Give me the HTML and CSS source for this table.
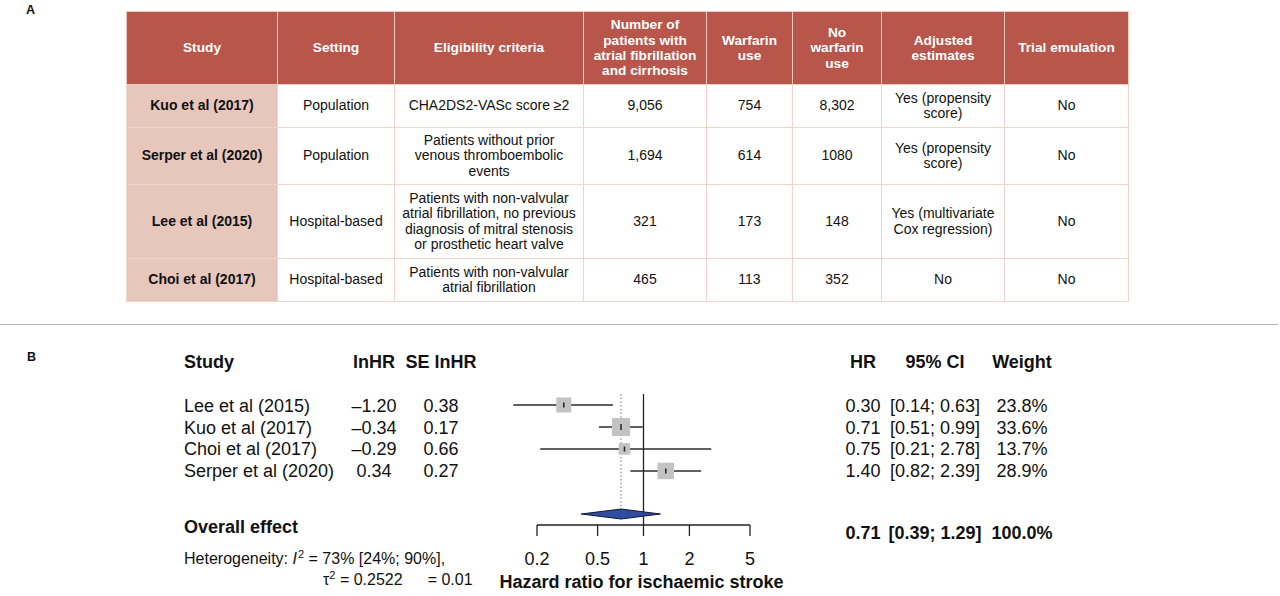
FILE: index.html
```html
<!DOCTYPE html>
<html lang="en">
<head>
<meta charset="utf-8">
<title>Warfarin in atrial fibrillation and cirrhosis</title>
<link rel="stylesheet" href="styles.css">
</head>
<body>
<section class="panel-a">
  <div class="panel-label">A</div>
  <table class="studies">
    <colgroup>
      <col class="c1"><col class="c2"><col class="c3"><col class="c4"><col class="c5"><col class="c6"><col class="c7"><col class="c8">
    </colgroup>
    <thead>
      <tr class="h-head">
        <th>Study</th>
        <th>Setting</th>
        <th>Eligibility criteria</th>
        <th>Number of patients with atrial fibrillation and cirrhosis</th>
        <th>Warfarin<br>use</th>
        <th>No<br>warfarin<br>use</th>
        <th>Adjusted<br>estimates</th>
        <th>Trial emulation</th>
      </tr>
    </thead>
    <tbody>
      <tr class="h1">
        <th>Kuo et al (2017)</th>
        <td>Population</td>
        <td>CHA2DS2-VASc score ≥2</td>
        <td>9,056</td>
        <td>754</td>
        <td>8,302</td>
        <td>Yes (propensity<br>score)</td>
        <td>No</td>
      </tr>
      <tr class="h2">
        <th>Serper et al (2020)</th>
        <td>Population</td>
        <td>Patients without prior<br>venous thromboembolic<br>events</td>
        <td>1,694</td>
        <td>614</td>
        <td>1080</td>
        <td>Yes (propensity<br>score)</td>
        <td>No</td>
      </tr>
      <tr class="h3">
        <th>Lee et al (2015)</th>
        <td>Hospital-based</td>
        <td>Patients with non-valvular<br>atrial fibrillation, no previous<br>diagnosis of mitral stenosis<br>or prosthetic heart valve</td>
        <td>321</td>
        <td>173</td>
        <td>148</td>
        <td>Yes (multivariate<br>Cox regression)</td>
        <td>No</td>
      </tr>
      <tr class="h1">
        <th>Choi et al (2017)</th>
        <td>Hospital-based</td>
        <td>Patients with non-valvular<br>atrial fibrillation</td>
        <td>465</td>
        <td>113</td>
        <td>352</td>
        <td>No</td>
        <td>No</td>
      </tr>
    </tbody>
  </table>
</section>

<section class="panel-b">
  <div class="panel-label b-label">B</div>

  <div class="left-cols">
    <div class="row head"><span class="c-study">Study</span><span class="c-ln">lnHR</span><span class="c-se">SE lnHR</span></div>
    <div class="rows">
      <div class="row"><span class="c-study">Lee et al (2015)</span><span class="c-ln">–1.20</span><span class="c-se">0.38</span></div>
      <div class="row"><span class="c-study">Kuo et al (2017)</span><span class="c-ln">–0.34</span><span class="c-se">0.17</span></div>
      <div class="row"><span class="c-study">Choi et al (2017)</span><span class="c-ln">–0.29</span><span class="c-se">0.66</span></div>
      <div class="row"><span class="c-study">Serper et al (2020)</span><span class="c-ln">0.34</span><span class="c-se">0.27</span></div>
    </div>
    <div class="overall">Overall effect</div>
    <div class="het">Heterogeneity: <i>I</i><sup>2</sup> = 73% [24%; 90%],</div>
    <div class="het het2"><span>τ<sup>2</sup> = 0.2522</span><span class="pval">= 0.01</span></div>
  </div>

  <svg class="plot" width="360" height="216" viewBox="0 0 360 216" xmlns="http://www.w3.org/2000/svg">
    <line x1="143" y1="14" x2="143" y2="132" stroke="#8a8a8a" stroke-width="1.2" stroke-dasharray="1.5 2.2"/>
    <g stroke="#2b2b2b" stroke-width="1.3">
      <line x1="35.3" y1="25" x2="134.9" y2="25"/>
      <line x1="121" y1="47" x2="164.8" y2="47"/>
      <line x1="62.2" y1="69" x2="233.2" y2="69"/>
      <line x1="152.4" y1="91" x2="223.2" y2="91"/>
    </g>
    <g fill="#c3c3c3">
      <rect x="78.3" y="17.5" width="15" height="15"/>
      <rect x="134" y="38" width="18" height="18"/>
      <rect x="140.7" y="63.2" width="11.5" height="11.5"/>
      <rect x="179.5" y="82.7" width="16.5" height="16.5"/>
    </g>
    <g stroke="#2b2b2b" stroke-width="1.6">
      <line x1="85.8" y1="22.5" x2="85.8" y2="27.5"/>
      <line x1="143" y1="44" x2="143" y2="50"/>
      <line x1="146.5" y1="66.5" x2="146.5" y2="71.5"/>
      <line x1="187.8" y1="88.5" x2="187.8" y2="93.5"/>
    </g>
    <line x1="165.5" y1="14" x2="165.5" y2="145" stroke="#222" stroke-width="1.3"/>
    <polygon points="103.2,134 143,129 182.4,134 143,139" fill="#2f4c9e" stroke="#15183a" stroke-width="1"/>
    <g stroke="#222" stroke-width="1.3">
      <line x1="59" y1="145" x2="272" y2="145"/>
      <line x1="59" y1="145" x2="59" y2="156"/>
      <line x1="119.6" y1="145" x2="119.6" y2="156"/>
      <line x1="165.5" y1="145" x2="165.5" y2="156"/>
      <line x1="211.4" y1="145" x2="211.4" y2="156"/>
      <line x1="272" y1="145" x2="272" y2="156"/>
    </g>
    <g class="ticks" text-anchor="middle">
      <text x="59" y="184.5">0.2</text>
      <text x="119.6" y="184.5">0.5</text>
      <text x="165.5" y="184.5">1</text>
      <text x="211.4" y="184.5">2</text>
      <text x="272" y="184.5">5</text>
    </g>
    <text class="axis-title" x="163.5" y="208" text-anchor="middle">Hazard ratio for ischaemic stroke</text>
  </svg>

  <div class="right-cols">
    <div class="row head"><span class="c-hr">HR</span><span class="c-ci">95% CI</span><span class="c-w">Weight</span></div>
    <div class="rows">
      <div class="row"><span class="c-hr">0.30</span><span class="c-ci">[0.14; 0.63]</span><span class="c-w">23.8%</span></div>
      <div class="row"><span class="c-hr">0.71</span><span class="c-ci">[0.51; 0.99]</span><span class="c-w">33.6%</span></div>
      <div class="row"><span class="c-hr">0.75</span><span class="c-ci">[0.21; 2.78]</span><span class="c-w">13.7%</span></div>
      <div class="row"><span class="c-hr">1.40</span><span class="c-ci">[0.82; 2.39]</span><span class="c-w">28.9%</span></div>
    </div>
    <div class="row total"><span class="c-hr">0.71</span><span class="c-ci">[0.39; 1.29]</span><span class="c-w">100.0%</span></div>
  </div>
</section>
</body>
</html>
```

FILE: styles.css
```css
html, body {
  margin: 0;
  padding: 0;
  background: #ffffff;
}
body {
  width: 1280px;
  height: 596px;
  overflow: hidden;
  font-family: "Liberation Sans", Arial, Helvetica, sans-serif;
  color: #111;
}

/* ---------- Panel A ---------- */
.panel-a {
  display: grid;
  grid-template-columns: 126px 1002px;
  padding: 11px 0 22px 0;
  width: 1278px;
  border-bottom: 1px solid #b4b4b4;
}
.panel-label {
  font-weight: bold;
  font-size: 12.5px;
  padding-left: 26px;
  margin-top: -8px;
  line-height: 14px;
}

.studies {
  width: 1002px;
  border-collapse: collapse;
  table-layout: fixed;
  font-size: 14px;
  line-height: 15.3px;
  text-align: center;
  border: 1px solid #f1d3cb;
}
.studies col.c1 { width: 151px; }
.studies col.c2 { width: 117px; }
.studies col.c3 { width: 189px; }
.studies col.c4 { width: 123px; }
.studies col.c5 { width: 86px; }
.studies col.c6 { width: 89px; }
.studies col.c7 { width: 123px; }
.studies col.c8 { width: 124px; }

.studies th,
.studies td {
  border: 1px solid #f1d3cb;
  padding: 0 2px;
  vertical-align: middle;
}
.studies thead th {
  background: #b9564b;
  color: #ffffff;
  font-weight: bold;
  font-size: 13.7px;
  border-color: #f0c9bf;
}
.studies tbody th {
  background: #e7c6bc;
  font-weight: bold;
  color: #111;
}
.studies tbody td {
  background: #ffffff;
}
.h-head { height: 73px; }
.h1 { height: 43px; }
.h2 { height: 57px; }
.h3 { height: 74px; }

/* ---------- Panel B ---------- */
.panel-b {
  display: grid;
  grid-template-columns: 184px 294px 360px 1fr;
  align-items: start;
}
.b-label {
  margin-top: 25px;
  padding-left: 27px;
}

.row {
  display: flex;
  height: 21.67px;
  line-height: 21.67px;
  font-size: 18px;
  white-space: nowrap;
}
.row.head {
  font-weight: bold;
  height: 22px;
  line-height: 22px;
}

.left-cols {
  padding-top: 26px;
}
.left-cols .rows {
  margin-top: 23px;
}
.c-study { width: 160px; }
.c-ln { width: 60px; text-align: center; }
.c-se { width: 74px; text-align: center; }

.overall {
  margin-top: 33px;
  font-size: 18px;
  font-weight: bold;
  line-height: 22px;
}
.het {
  font-size: 16px;
  line-height: 21.67px;
  white-space: nowrap;
}
.overall + .het {
  margin-top: 10px;
}
.het sup {
  font-size: 11px;
  line-height: 0;
  vertical-align: 6px;
}
.het i {
  padding-right: 1px;
}
.het2 {
  display: flex;
  padding-left: 139px;
}
.het2 .pval {
  margin-left: 25px;
}

.plot {
  display: block;
  margin-top: 55px;
}
.ticks text {
  font-size: 18px;
  fill: #111;
  font-family: "Liberation Sans", Arial, Helvetica, sans-serif;
}
.axis-title {
  font-size: 18px;
  font-weight: bold;
  fill: #111;
  font-family: "Liberation Sans", Arial, Helvetica, sans-serif;
}

.right-cols {
  padding-top: 26px;
}
.right-cols .rows {
  margin-top: 23px;
}
.c-hr { width: 50px; text-align: center; }
.c-ci { width: 94px; text-align: center; }
.c-w { width: 80px; text-align: center; }
.row.total {
  font-weight: bold;
  margin-top: 40px;
}
```
